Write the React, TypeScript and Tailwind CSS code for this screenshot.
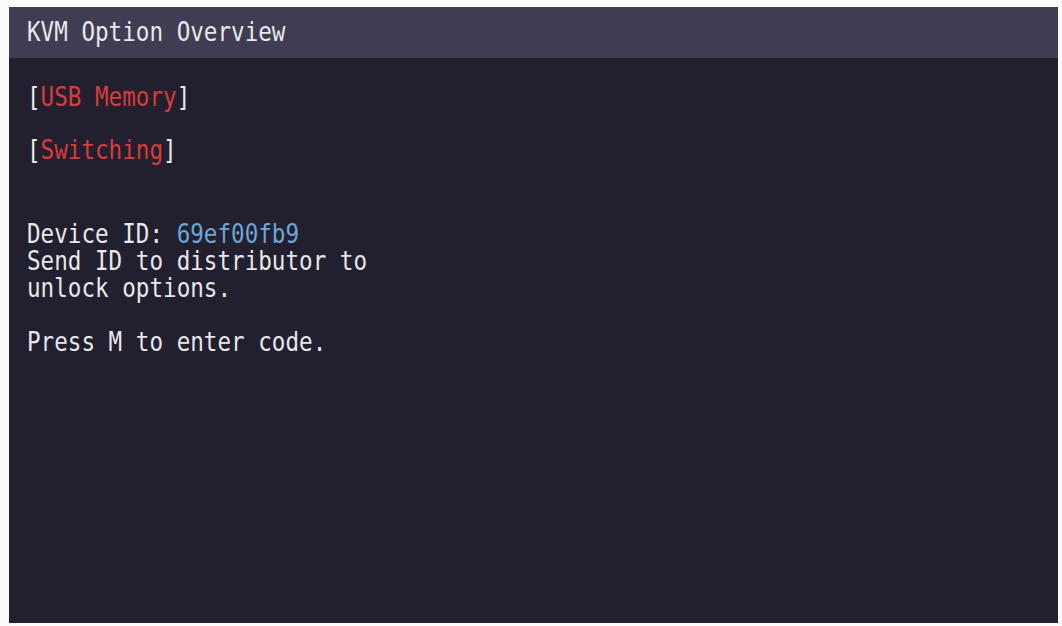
/**
 * KVM option overview screen
 * Dark OSD-style panel - 1049×616px
 */

const lineCls = 'h-[27px] leading-[27px] whitespace-pre';
const glyphCls = 'inline-block scale-y-[1.16] origin-center';

function Line({ children, className = '' }: { children: React.ReactNode; className?: string }) {
  return (
    <div className={`${lineCls} ${className}`}>
      <span className={glyphCls}>{children}</span>
    </div>
  );
}

export default function App() {
  return (
    <div
      className="w-[1062px] h-[626px] bg-[#fbfbfb] pt-[7px] pl-[9px] overflow-hidden"
      style={{ fontFamily: '"DejaVu Sans Mono", "Liberation Mono", monospace' }}
    >
      <div className="w-[1049px] h-[616px] bg-[#221f2e] flex flex-col text-[22.6px] text-[#e8e8ea]">
        {/* Header bar */}
        <div className="h-[51px] bg-[#3f3c54] flex items-center pl-[18px]">
          <Line>KVM Option Overview</Line>
        </div>

        {/* Body */}
        <div className="pl-[18px] pt-[26px] flex flex-col">
          <Line>
            [<span className="text-[#d83c3c]">USB Memory</span>]
          </Line>
          <Line className="mt-[26px]">
            [<span className="text-[#d83c3c]">Switching</span>]
          </Line>

          <div className="mt-[57px]">
            <Line>
              Device ID: <span className="text-[#6fa6d8]">69ef00fb9</span>
            </Line>
            <Line>Send ID to distributor to</Line>
            <Line>unlock options.</Line>
          </div>

          <Line className="mt-[27px]">Press M to enter code.</Line>
        </div>
      </div>
    </div>
  );
}
